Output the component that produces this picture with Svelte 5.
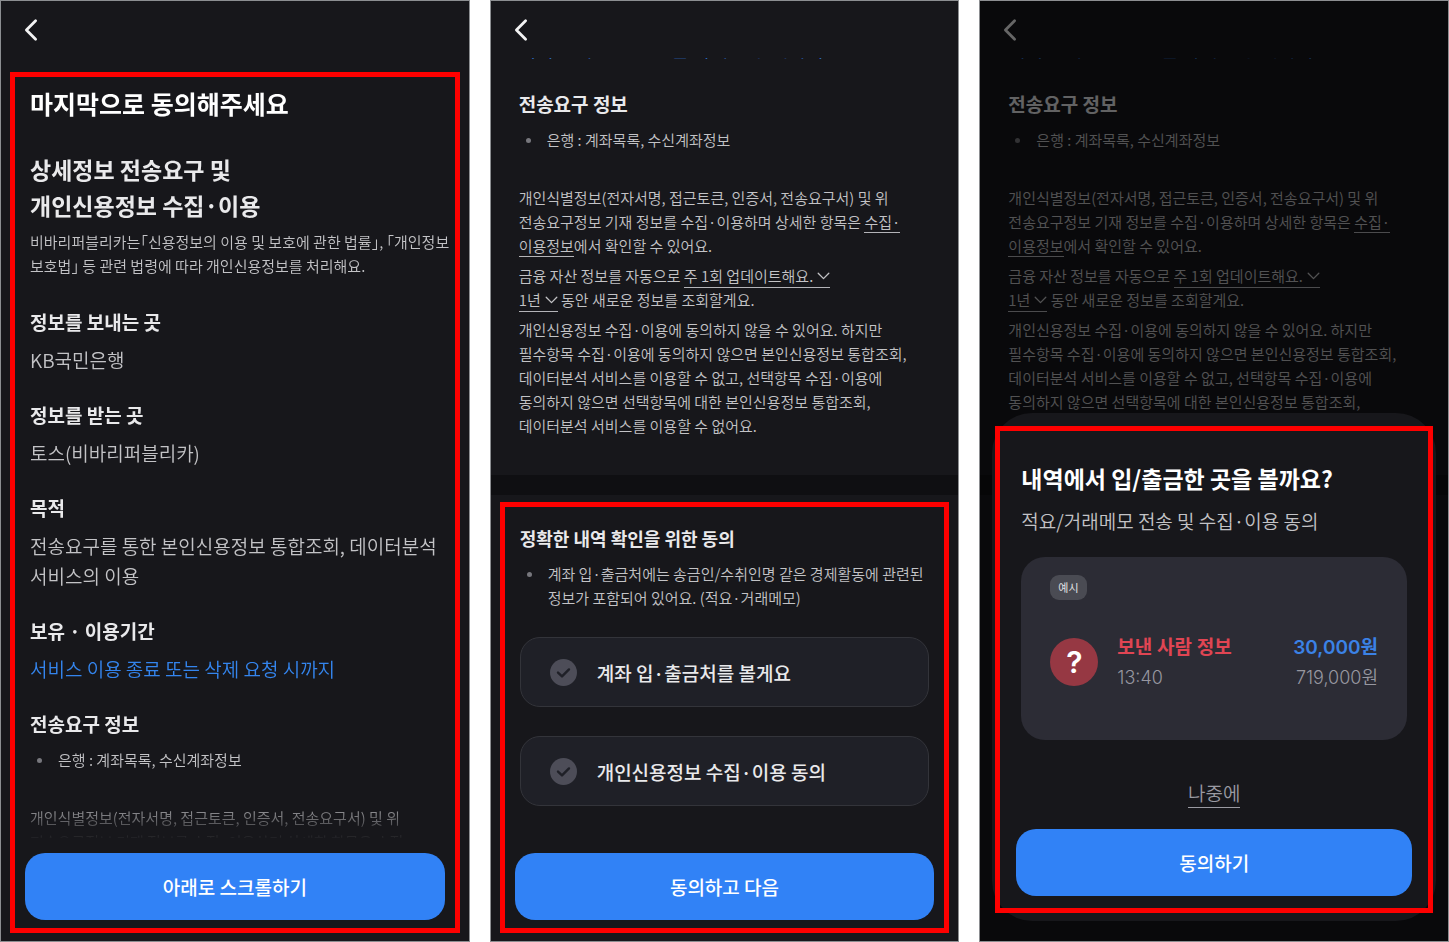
<!--
	ConsentFlow — the three consent screens side by side:
	1. final agreement text, 2. scrolled agreement with its options,
	3. bottom sheet that asks for the memo agreement.
	Red frames mark the part of each screen that the guide talks about.
-->
<script lang="ts">
	const sections: { title: string; lines: string[]; accent?: boolean }[] = [
		{ title: '정보를 보내는 곳', lines: ['KB국민은행'] },
		{ title: '정보를 받는 곳', lines: ['토스(비바리퍼블리카)'] },
		{ title: '목적', lines: ['전송요구를 통한 본인신용정보 통합조회, 데이터분석', '서비스의 이용'] },
		{ title: '보유 · 이용기간', lines: ['서비스 이용 종료 또는 삭제 요청 시까지'], accent: true }
	];

	const optOutLines = [
		'개인신용정보 수집·이용에 동의하지 않을 수 있어요. 하지만',
		'필수항목 수집·이용에 동의하지 않으면 본인신용정보 통합조회,',
		'데이터분석 서비스를 이용할 수 없고, 선택항목 수집·이용에',
		'동의하지 않으면 선택항목에 대한 본인신용정보 통합조회,',
		'데이터분석 서비스를 이용할 수 없어요.'
	];

	let options = $state([
		{ label: '계좌 입·출금처를 볼게요', checked: false },
		{ label: '개인신용정보 수집·이용 동의', checked: false }
	]);
</script>

{#snippet header()}
	<header class="topbar">
		<button class="back" type="button" aria-label="뒤로">
			<svg aria-hidden="true" width="14" height="24" viewBox="0 0 14 24" fill="none">
				<path
					d="M11.6 2.8 2.4 12 11.6 21.2"
					stroke="currentColor"
					stroke-width="2.8"
					stroke-linecap="round"
					stroke-linejoin="round"
				></path>
			</svg>
		</button>
	</header>
{/snippet}

{#snippet lines(items: string[])}
	{#each items as line, i}{#if i > 0}<br />{/if}{line}{/each}
{/snippet}

{#snippet picker(label: string, value: string)}
	<span class="picker">
		<select aria-label={label}>
			<option>{value}</option>
		</select>
		<svg aria-hidden="true" width="13" height="8" viewBox="0 0 13 8" fill="none">
			<path
				d="M1.2 1.2 6.5 6.6 11.8 1.2"
				stroke="currentColor"
				stroke-width="1.3"
				stroke-linecap="round"
				stroke-linejoin="round"
			></path>
		</svg>
	</span>
{/snippet}

{#snippet transferInfo()}
	<section class="section">
		<h3>전송요구 정보</h3>
		<ul class="bullets">
			<li>은행 : 계좌목록, 수신계좌정보</li>
		</ul>
	</section>
{/snippet}

{#snippet identifiers()}
	<p>
		개인식별정보(전자서명, 접근토큰, 인증서, 전송요구서) 및 위<br />
		전송요구정보 기재 정보를 수집·이용하며 상세한 항목은
		<a href="#items">수집·<br />이용정보</a>에서 확인할 수 있어요.
	</p>
{/snippet}

{#snippet scrolled()}
	<div class="scrolled">
		<p class="text accent leaving">{@render lines(sections[3].lines)}</p>
		{@render transferInfo()}
		<div class="details">
			{@render identifiers()}
			<p>
				금융 자산 정보를 자동으로 {@render picker('업데이트 주기', '주 1회 업데이트해요.')}<br />
				{@render picker('조회 기간', '1년')} 동안 새로운 정보를 조회할게요.
			</p>
			<p>{@render lines(optOutLines)}</p>
		</div>
	</div>
	<div class="divider"></div>
{/snippet}

<main class="board">
	<div class="phone">
		{@render header()}
		<div class="frame agreement">
			<div class="reader">
				<h1>마지막으로 동의해주세요</h1>
				<h2>상세정보 전송요구 및<br />개인신용정보 수집·이용</h2>
				<p class="law">
					비바리퍼블리카는「신용정보의 이용 및 보호에 관한 법률」, 「개인정보<br />
					보호법」 등 관련 법령에 따라 개인신용정보를 처리해요.
				</p>
				{#each sections as section (section.title)}
					<section class="section">
						<h3>{section.title}</h3>
						<p class="text" class:accent={section.accent}>{@render lines(section.lines)}</p>
					</section>
				{/each}
				{@render transferInfo()}
				<div class="details">{@render identifiers()}</div>
			</div>
			<button class="cta" type="button">아래로 스크롤하기</button>
		</div>
	</div>

	<div class="phone">
		{@render header()}
		{@render scrolled()}
		<div class="frame choices">
			<div class="purpose">
				<h3>정확한 내역 확인을 위한 동의</h3>
				<ul class="bullets">
					<li>
						계좌 입·출금처에는 송금인/수취인명 같은 경제활동에 관련된<br />
						정보가 포함되어 있어요. (적요·거래메모)
					</li>
				</ul>
			</div>
			<div class="options">
				{#each options as option (option.label)}
					<label class="option">
						<span class="tick">
							<input type="checkbox" bind:checked={option.checked} />
							<svg aria-hidden="true" width="27" height="27" viewBox="0 0 27 27" fill="none">
								<path
									d="M8 13.6 12 17.4 19 10.4"
									stroke="currentColor"
									stroke-width="2.4"
									stroke-linecap="round"
									stroke-linejoin="round"
								></path>
							</svg>
						</span>
						{option.label}
					</label>
				{/each}
			</div>
			<button class="cta" type="button">동의하고 다음</button>
		</div>
	</div>

	<div class="phone">
		{@render header()}
		{@render scrolled()}
		<div class="dim"></div>
		<div class="sheet" role="dialog" aria-labelledby="sheet-title">
			<div class="frame ask">
				<h2 id="sheet-title">내역에서 입/출금한 곳을 볼까요?</h2>
				<p class="text">적요/거래메모 전송 및 수집·이용 동의</p>
				<div class="sample">
					<span class="badge">예시</span>
					<div class="entry">
						<span class="avatar">?</span>
						<div class="who">
							<strong>보낸 사람 정보</strong>
							<span>13:40</span>
						</div>
						<div class="amount">
							<strong>30,000원</strong>
							<span>719,000원</span>
						</div>
					</div>
				</div>
				<button class="later" type="button">나중에</button>
				<button class="cta" type="button">동의하기</button>
			</div>
		</div>
	</div>
</main>

<style>
	:global(body) {
		margin: 0;
		background: #fff;
	}

	h1,
	h2,
	h3,
	p,
	ul {
		margin: 0;
		padding: 0;
	}

	button,
	select {
		border: none;
		padding: 0;
		background: none;
		color: inherit;
		font: inherit;
		cursor: pointer;
	}

	.board {
		display: grid;
		grid-template-columns: repeat(3, minmax(0, 1fr));
		gap: 20px;
		height: 100vh;
		font-family: 'Noto Sans CJK KR', sans-serif;
		word-break: keep-all;
	}

	.phone {
		position: relative;
		display: flex;
		flex-direction: column;
		box-sizing: border-box;
		min-height: 0;
		padding-bottom: 8px;
		border: 1px solid #8c8e91;
		background: #17171b;
		color: #c3c3c6;
		overflow: hidden;
	}

	.topbar {
		flex: none;
		display: flex;
		align-items: center;
		height: 57px;
		padding-left: 23px;
	}

	.back {
		display: flex;
		color: #f2f2f3;
	}

	.frame {
		display: flex;
		flex-direction: column;
		border: 5px solid #fe0000;
	}

	h1,
	h2,
	h3 {
		color: #e9e9eb;
		font-weight: 600;
	}

	h1 {
		color: #fff;
		font-size: 25px;
		line-height: 36px;
	}

	h2 {
		font-size: 23px;
		line-height: 36px;
	}

	h3 {
		font-size: 19px;
		line-height: 30px;
	}

	.text {
		font-size: 19px;
		font-weight: 350;
		line-height: 30px;
	}

	.text.accent {
		color: #3485ee;
	}

	.law,
	.bullets,
	.details {
		font-size: 15px;
		font-weight: 350;
		line-height: 24px;
	}

	.law {
		padding: 7px 0 4px;
		font-feature-settings: 'halt';
		white-space: nowrap;
	}

	.section {
		padding-top: 25px;
	}

	.section .text {
		padding-top: 8px;
	}

	.bullets {
		padding-top: 9px;
		list-style: none;
	}

	.bullets li {
		display: flex;
		gap: 16px;
	}

	.bullets li::before {
		content: '';
		flex: none;
		width: 5px;
		height: 5px;
		margin: 10px 0 0 7px;
		border-radius: 50%;
		background: #77777d;
	}

	.details {
		display: flex;
		flex-direction: column;
		gap: 6px;
		padding-top: 34px;
	}

	.details a {
		border-bottom: 1px solid #b4b4b8;
		color: inherit;
		text-decoration: none;
	}

	.picker {
		display: inline-flex;
		align-items: center;
		gap: 3px;
		height: 22px;
		margin-top: 1px;
		border-bottom: 1px solid #b4b4b8;
		vertical-align: top;
	}

	.picker select {
		appearance: none;
		height: 22px;
		line-height: 22px;
	}

	.agreement {
		flex: 1;
		min-height: 0;
		margin: 14px 9px 0;
		padding: 0 5px 8px;
	}

	.reader {
		flex: 1;
		min-height: 0;
		padding: 8px 0 0 10px;
		overflow: hidden;
		mask-image: linear-gradient(to bottom, #000 calc(100% - 40px), rgba(0, 0, 0, 0.05));
	}

	.reader h2 {
		padding-top: 30px;
	}

	.cta {
		flex: none;
		height: 67px;
		border-radius: 20px;
		background: #3182f6;
		color: #fff;
		font-size: 19px;
		font-weight: 500;
	}

	.agreement .cta {
		margin: 15px 5px 0;
	}

	.scrolled {
		flex: none;
		padding: 0 28px 37px;
		overflow: hidden;
	}

	.leaving {
		margin-top: -24px;
	}

	.divider {
		flex: none;
		height: 20px;
		background: #0f0f12;
	}

	.choices {
		flex: 1;
		margin: 7px 9px 0;
		padding: 16px 10px 8px;
	}

	.purpose {
		padding-left: 5px;
	}

	.purpose h3 {
		font-size: 18px;
	}

	.options {
		display: flex;
		flex-direction: column;
		gap: 29px;
		padding: 27px 5px;
	}

	.option {
		display: flex;
		align-items: center;
		gap: 20px;
		box-sizing: border-box;
		height: 70px;
		padding: 0 29px;
		border: 1px solid #33343a;
		border-radius: 20px;
		background: #1f2027;
		color: #e9e9eb;
		font-size: 19px;
		font-weight: 500;
		cursor: pointer;
	}

	.tick {
		display: grid;
		color: #1f2027;
	}

	.tick > * {
		grid-area: 1 / 1;
	}

	.tick svg {
		z-index: 1;
		pointer-events: none;
	}

	.tick input {
		appearance: none;
		width: 27px;
		height: 27px;
		margin: 0;
		border-radius: 50%;
		background: #4d4d58;
	}

	.tick input:checked {
		background: #3182f6;
	}

	.choices .cta {
		margin-top: auto;
	}

	.dim {
		position: absolute;
		inset: 0;
		background: rgba(0, 0, 0, 0.58);
	}

	.sheet {
		position: absolute;
		right: 12px;
		bottom: 20px;
		left: 12px;
		border-radius: 40px;
		background: #17171b;
	}

	.ask {
		margin: 13px 3px 8px;
		padding: 32px 16px 12px;
	}

	.ask h2 {
		padding: 0 5px 13px;
		color: #fff;
		line-height: 30px;
	}

	.ask .text {
		padding: 0 5px 21px;
	}

	.sample {
		box-sizing: border-box;
		height: 183px;
		margin: 0 5px;
		padding: 18px 29px;
		border-radius: 24px;
		background: #2c2c35;
	}

	.badge {
		display: block;
		width: fit-content;
		padding: 0 8px;
		border-radius: 9px;
		background: #4a4b53;
		color: #e0e0e3;
		font-size: 11px;
		line-height: 25px;
	}

	.entry {
		display: flex;
		align-items: center;
		padding-top: 30px;
		font-family: Inter, 'Noto Sans CJK KR', sans-serif;
		font-size: 18px;
		line-height: 30px;
	}

	.avatar {
		flex: none;
		width: 48px;
		margin-right: 19px;
		border-radius: 50%;
		background: #963843;
		color: #fff;
		font-size: 30px;
		font-weight: 600;
		line-height: 48px;
		text-align: center;
	}

	.who,
	.amount {
		display: flex;
		flex-direction: column;
		padding-top: 3px;
		color: #9797a0;
		font-weight: 350;
	}

	.amount {
		margin-left: auto;
		text-align: right;
	}

	.entry strong {
		font-size: 19px;
		font-weight: 600;
	}

	.who strong {
		color: #e04553;
	}

	.amount strong {
		color: #3b82e6;
	}

	.later {
		align-self: center;
		box-sizing: border-box;
		height: 30px;
		margin: 38px 0 21px;
		border-bottom: 1px solid #9a9aa2;
		color: #9a9aa2;
		font-size: 19px;
		font-weight: 350;
		line-height: 29px;
	}
</style>
